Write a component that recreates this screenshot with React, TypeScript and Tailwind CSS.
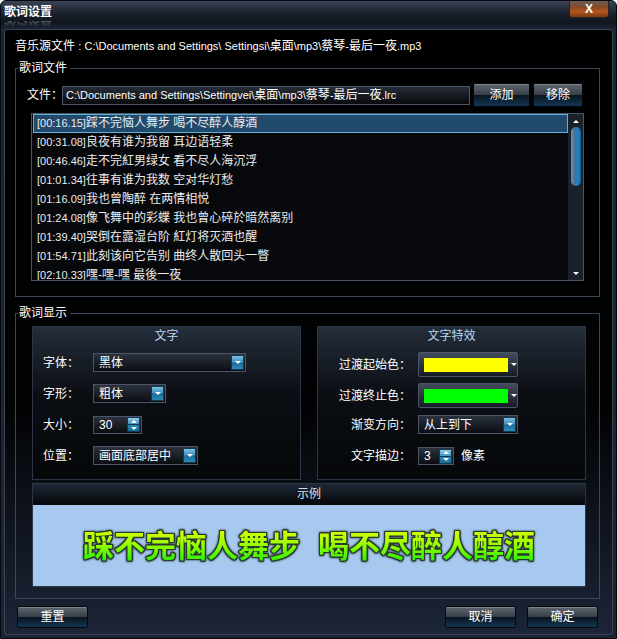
import React from 'react';

interface SelectProps {
  width: string;
  value: string;
}

interface RowProps {
  label: string;
  children: React.ReactNode;
  className?: string;
}

interface PanelProps {
  title: string;
  children: React.ReactNode;
}

interface GroupProps {
  title: string;
  className: string;
  children: React.ReactNode;
}

const lyrics: [string, string][] = [
  ['[00:16.15]', '踩不完恼人舞步 喝不尽醉人醇酒'],
  ['[00:31.08]', '良夜有谁为我留 耳边语轻柔'],
  ['[00:46.46]', '走不完紅男绿女 看不尽人海沉浮'],
  ['[01:01.34]', '往事有谁为我数 空对华灯愁'],
  ['[01:16.09]', '我也曾陶醉 在两情相悦'],
  ['[01:24.08]', '像飞舞中的彩蝶 我也曾心碎於暗然离别'],
  ['[01:39.40]', '哭倒在露湿台阶 紅灯将灭酒也醒'],
  ['[01:54.71]', '此刻该向它告别 曲终人散回头一瞥'],
  ['[02:10.33]', '嘿-嘿-嘿 最後一夜'],
];

const DownTri = () => <div className="w-0 h-0 border-x-[3px] border-x-transparent border-t-[3px] border-t-white" />;
const UpTri = () => <div className="w-0 h-0 border-x-[3px] border-x-transparent border-b-[3px] border-b-white" />;

const DropArrow = () => (
  <div className="w-[13px] h-[15px] flex items-center justify-center border border-[#0f3a58] bg-[linear-gradient(to_bottom,#7cc0e2_0%,#3f92bd_45%,#1c6d99_55%,#2b8ab8_100%)]">
    <DownTri />
  </div>
);

const Select: React.FC<SelectProps> = ({ width, value }) => (
  <div className={`${width} h-[19px] flex items-center justify-between pl-[5px] pr-[1px] border border-[#4b5566] bg-[linear-gradient(to_bottom,#2b323d,#0a0d12)]`}>
    <span className="leading-[14px]">{value}</span>
    <DropArrow />
  </div>
);

const Spin: React.FC<SelectProps> = ({ width, value }) => (
  <div className={`${width} h-[18px] flex items-center justify-between pl-[5px] pr-[1px] border border-[#4b5566] bg-[linear-gradient(to_bottom,#2b323d,#0a0d12)]`}>
    <span className="leading-[14px]">{value}</span>
    <div className="w-[13px] h-[15px] flex flex-col border border-[#0f3a58]">
      <div className="flex-1 flex items-center justify-center border-b border-[#0f3a58] bg-[linear-gradient(to_bottom,#8fcbe8,#3f92bd)]">
        <UpTri />
      </div>
      <div className="flex-1 flex items-center justify-center bg-[linear-gradient(to_bottom,#2a88b6,#1c6d99)]">
        <DownTri />
      </div>
    </div>
  </div>
);

const ColorBox: React.FC<{ color: string }> = ({ color }) => (
  <div className="w-[100px] h-[25px] flex items-center pl-[5px] gap-[3px] border border-[#4b5566] rounded-[2px] bg-[linear-gradient(to_bottom,#434c5c,#161c26)]">
    <div className={`w-[84px] h-[14px] ${color}`} />
    <DownTri />
  </div>
);

const Btn: React.FC<{ width: string; height: string; children: React.ReactNode }> = ({ width, height, children }) => (
  <div className={`${width} ${height} flex items-center justify-center border border-[#06080b] rounded-[2px] shadow-[inset_0_1px_0_#7b838d] bg-[linear-gradient(to_bottom,#60676f_0%,#383f49_48%,#0c141f_52%,#123655_100%)] text-[12px] text-white`}>
    {children}
  </div>
);

const Group: React.FC<GroupProps> = ({ title, className, children }) => (
  <div className={`ml-[10px] w-[585px] flex flex-col ${className}`}>
    <div className="flex items-end h-[14px]">
      <div className="w-[3px] h-[7px] border-l border-t border-[#3d4758]" />
      <span className="pl-[1px] pr-[3px] leading-[14px]">{title}</span>
      <div className="flex-1 h-[7px] border-t border-r border-[#3d4758]" />
    </div>
    <div className="border-x border-b border-[#3d4758]">{children}</div>
  </div>
);

const Panel: React.FC<PanelProps> = ({ title, children }) => (
  <div className="h-[154px] flex flex-col border border-[#2c3646] bg-[linear-gradient(to_bottom,#242d3a_0%,#0b0e13_45%,#050709_100%)]">
    <div className="h-[18px] leading-[18px] text-center text-[#bcd6f2]">{title}</div>
    {children}
  </div>
);

const LeftRow: React.FC<RowProps> = ({ label, children }) => (
  <div className="h-[19px] flex items-center">
    <span className="w-[50px] leading-[14px]">{label}</span>
    {children}
  </div>
);

const RightRow: React.FC<RowProps> = ({ label, children, className }) => (
  <div className={`flex items-center ${className ?? ''}`}>
    <span className="w-[100px] pr-[7px] text-right leading-[14px]">{label}</span>
    {children}
  </div>
);

const sampleText =
  'bg-[linear-gradient(to_bottom,#e8ff00_0%,#9cff00_50%,#22f000_100%)] bg-clip-text text-transparent [filter:drop-shadow(1px_0_0_#2a3832)_drop-shadow(-1px_0_0_#2a3832)_drop-shadow(0_1px_0_#2a3832)_drop-shadow(0_-1px_0_#2a3832)_drop-shadow(0_0_1px_#2a3832)]';

export default function App() {
  return (
    <div className="w-[617px] h-[639px] flex flex-col overflow-hidden rounded-t-[6px] border border-[#07090d] bg-[#1b2434] text-[12px] text-white [font-family:'Liberation_Sans','Noto_Sans_CJK_SC',sans-serif]">
      {/* title bar */}
      <div className="h-[28px] flex justify-between bg-[linear-gradient(to_bottom,#3a4455_0%,#1a212d_45%,#10151d_75%,#1b2434_100%)]">
        <div className="flex flex-col pl-[3px] pt-[4px]">
          <span className="text-[12px] font-bold leading-[14px]">歌词设置</span>
          <div className="h-[8px] overflow-hidden opacity-40 [mask-image:linear-gradient(to_bottom,black,transparent)]">
            <span className="block -scale-y-100 text-[12px] font-bold leading-[14px]">歌词设置</span>
          </div>
        </div>
        <div className="mr-[7px] w-[40px] h-[17px] flex items-center justify-center rounded-b-[3px] border border-t-0 border-[#2a2522] bg-[linear-gradient(to_bottom,#6a5d56_0%,#874a28_40%,#b5561c_65%,#7a3917_100%)] text-[12px] font-bold leading-none">
          X
        </div>
      </div>

      {/* body */}
      <div className="flex-1 mx-[3px] mb-[3px] flex flex-col border border-[#3a4454] rounded-[3px] bg-[linear-gradient(to_bottom,#000000_0%,#010203_62%,#1c2537_100%)]">
        <div className="pt-[9px] pl-[10px] leading-[14px] whitespace-nowrap">
          音乐源文件 <span className="text-[11px]">: {'C:\\Documents and Settings\\ Settingsi\\'}</span>桌面
          <span className="text-[11px]">{'\\mp3\\'}</span>蔡琴<span className="text-[11px]">-</span>最后一夜
          <span className="text-[11px]">.mp3</span>
        </div>

        <Group title="歌词文件" className="mt-[8px]">
          <div className="pt-[8px] px-[15px] pb-[15px]">
            <div className="h-[24px] flex items-center -ml-[4px]">
              <span className="w-[35px] shrink-0 whitespace-nowrap leading-[14px]">文件：</span>
              <div className="w-[408px] shrink-0 h-[19px] flex items-center pl-[3px] border border-[#4b5566] bg-[linear-gradient(to_bottom,#262d38,#07090c)] leading-[14px] whitespace-nowrap overflow-hidden">
                <span className="text-[11px]">{'C:\\Documents and Settings\\Settingvei\\'}</span>桌面
                <span className="text-[11px]">{'\\mp3\\'}</span>蔡琴<span className="text-[11px]">-</span>最后一夜
                <span className="text-[11px]">.lrc</span>
              </div>
              <div className="ml-[3px] shrink-0">
                <Btn width="w-[57px]" height="h-[24px]">添加</Btn>
              </div>
              <div className="ml-[3px] shrink-0">
                <Btn width="w-[50px]" height="h-[24px]">移除</Btn>
              </div>
            </div>
            <div className="mt-[6px] h-[168px] flex border border-[#4b5566] bg-[#06080c]">
              <div className="flex-1 flex flex-col overflow-hidden pl-[1px]">
                {lyrics.map(([time, text], i) => (
                  <div
                    key={i}
                    className={`h-[19px] shrink-0 pl-[3px] leading-[17px] whitespace-nowrap border ${
                      i === 0 ? 'border-[#5fb3d9] bg-[#21496c]' : 'border-transparent'
                    } text-[#ececec]`}
                  >
                    <span className="text-[11px]">{time}</span>
                    {text}
                  </div>
                ))}
              </div>
              <div className="w-[15px] flex flex-col items-center pt-[6px] pb-[5px] bg-[#1b212b]">
                <UpTri />
                <div className="mt-[4px] w-[10px] h-[59px] rounded-[5px] bg-[linear-gradient(to_right,#7290ad_0%,#3f709a_40%,#1e86cb_70%,#195f96_100%)]" />
                <div className="flex-1" />
                <DownTri />
              </div>
            </div>
          </div>
        </Group>

        <Group title="歌词显示" className="mt-[9px]">
          <div className="pt-[6px] pl-[16px] pr-[13px] pb-[11px]">
            <div className="grid grid-cols-2 gap-[16px]">
              <Panel title="文字">
                <div className="mt-[8px] pl-[10px] flex flex-col gap-[12px]">
                  <LeftRow label="字体：">
                    <Select width="w-[153px]" value="黑体" />
                  </LeftRow>
                  <LeftRow label="字形：">
                    <Select width="w-[73px]" value="粗体" />
                  </LeftRow>
                  <LeftRow label="大小：">
                    <Spin width="w-[49px]" value="30" />
                  </LeftRow>
                  <LeftRow label="位置：">
                    <Select width="w-[105px]" value="画面底部居中" />
                  </LeftRow>
                </div>
              </Panel>
              <Panel title="文字特效">
                <div className="mt-[7px] flex flex-col">
                  <RightRow label="过渡起始色：">
                    <ColorBox color="bg-[#ffff00]" />
                  </RightRow>
                  <RightRow label="过渡终止色：" className="mt-[6px]">
                    <ColorBox color="bg-[#00ff00]" />
                  </RightRow>
                  <RightRow label="渐变方向：" className="mt-[7px]">
                    <Select width="w-[100px]" value="从上到下" />
                  </RightRow>
                  <RightRow label="文字描边：" className="mt-[13px]">
                    <Spin width="w-[36px]" value="3" />
                    <span className="ml-[7px] leading-[14px]">像素</span>
                  </RightRow>
                </div>
              </Panel>
            </div>
            <div className="mt-[3px] flex flex-col border border-[#2c3646]">
              <div className="h-[21px] leading-[21px] text-center text-[#d4e0ec] bg-[linear-gradient(to_bottom,#1f2835,#040608)]">
                示例
              </div>
              <div className="h-[81px] flex items-center justify-center gap-[18px] pb-[4px] bg-[#a7c9ef] text-[31px] font-bold leading-[36px] [font-family:'Noto_Sans_CJK_SC',sans-serif]">
                <span className={sampleText}>踩不完恼人舞步</span>
                <span className={sampleText}>喝不尽醉人醇酒</span>
              </div>
            </div>
          </div>
        </Group>

        <div className="mt-[7px] flex pl-[12px] pr-[14px]">
          <Btn width="w-[71px]" height="h-[22px]">重置</Btn>
          <div className="flex-1" />
          <Btn width="w-[71px]" height="h-[22px]">取消</Btn>
          <div className="ml-[11px]">
            <Btn width="w-[71px]" height="h-[22px]">确定</Btn>
          </div>
        </div>
      </div>
    </div>
  );
}
